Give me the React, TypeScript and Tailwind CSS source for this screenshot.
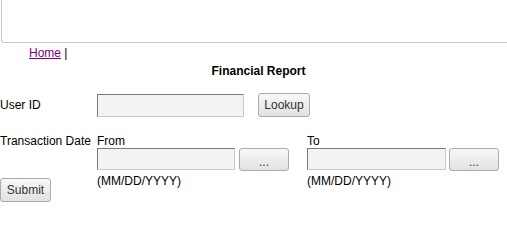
export default function App() {
	const inputCls =
		"bg-[#f3f3f3] border border-t-[#7a7a7a] border-l-[#7a7a7a] border-r-[#c9c9c9] border-b-[#c9c9c9] outline-none px-1 text-[12px]"
	const btnCls =
		"bg-linear-to-b from-[#f8f8f8] to-[#e2e2e2] border border-[#ababab] rounded-[3px] text-[#333] text-[12px] leading-none"

	return (
		<div className="w-[507px] h-[250px] overflow-hidden bg-white text-black text-[12px] leading-[14px] font-['Liberation_Sans',Arial,sans-serif]">
			<div className="h-[43px] ml-[1px] w-[540px] border-l border-b border-[#c8c8c8] rounded-bl-[3px]" />

			<div className="pl-[29px] mt-[3px]">
				<a href="#" className="text-[#800080] underline">
					Home
				</a>{" "}
				|
			</div>

			<div className="mt-[4px] pl-[10px] text-center font-bold">Financial Report</div>

			<div className="mt-[15px] flex items-center h-[24px]">
				<span className="w-[97px]">User ID</span>
				<input className={`${inputCls} w-[147px] h-[23px]`} />
				<button className={`${btnCls} ml-[14px] w-[52px] h-[24px]`}>Lookup</button>
			</div>

			<div className="mt-[17px] flex">
				<div className="w-[97px] flex flex-col items-start">
					<span>Transaction Date</span>
					<button className={`${btnCls} mt-[30px] w-[51px] h-[24px]`}>Submit</button>
				</div>

				<div className="w-[210px] flex flex-col">
					<span>From</span>
					<div className="flex gap-[4px]">
						<input className={`${inputCls} w-[138px] h-[22px]`} />
						<button className={`${btnCls} w-[50px] h-[23px] pt-[4px]`}>...</button>
					</div>
					<span className="mt-[3px]">(MM/DD/YYYY)</span>
				</div>

				<div className="flex flex-col">
					<span>To</span>
					<div className="flex gap-[3px]">
						<input className={`${inputCls} w-[139px] h-[22px]`} />
						<button className={`${btnCls} w-[50px] h-[23px] pt-[4px]`}>...</button>
					</div>
					<span className="mt-[3px]">(MM/DD/YYYY)</span>
				</div>
			</div>
		</div>
	)
}
